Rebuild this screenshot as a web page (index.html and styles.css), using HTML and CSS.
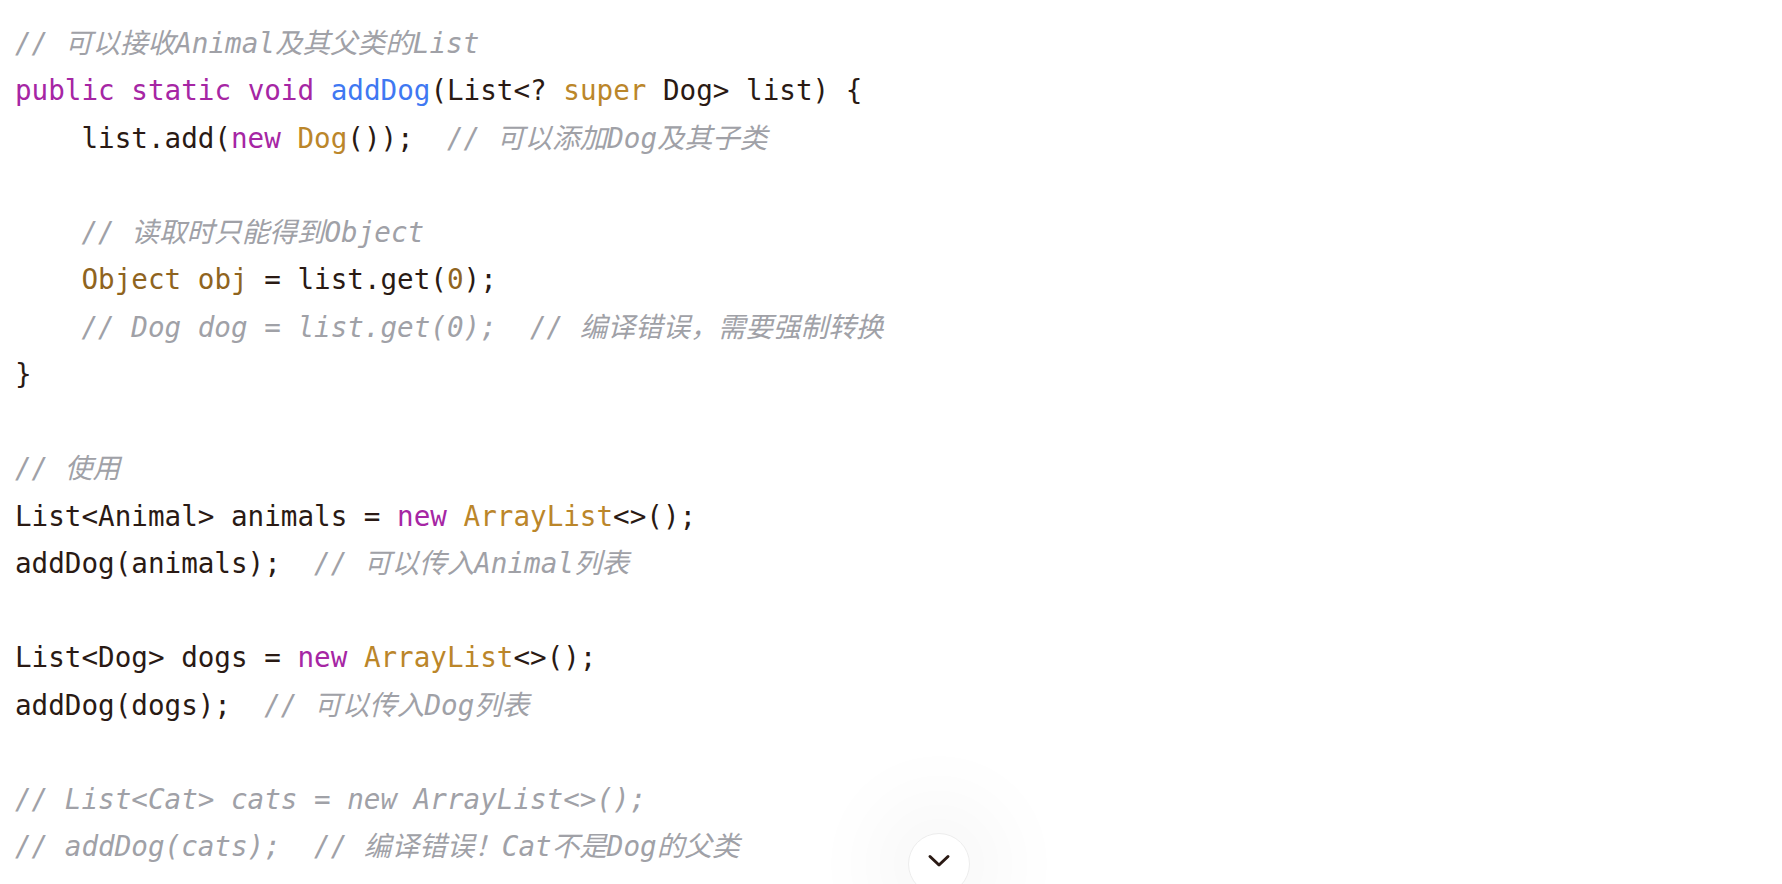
FILE: index.html
```html
<!DOCTYPE html>
<html lang="zh">
<head>
<meta charset="utf-8">
<title>Java 泛型 super 示例</title>
<link rel="stylesheet" href="styles.css">
</head>
<body>
<main class="page">
<pre class="code"><code><span class="c">// 可以接收Animal及其父类的List</span>
<span class="k">public</span> <span class="k">static</span> <span class="k">void</span> <span class="f">addDog</span>(List&lt;? <span class="t">super</span> Dog&gt; list) {
    list.add(<span class="k">new</span> <span class="t">Dog</span>());  <span class="c">// 可以添加Dog及其子类</span>

    <span class="c">// 读取时只能得到Object</span>
    <span class="v">Object</span> <span class="v">obj</span> = list.get(<span class="v">0</span>);
    <span class="c">// Dog dog = list.get(0);  // 编译错误，需要强制转换</span>
}

<span class="c">// 使用</span>
List&lt;Animal&gt; animals = <span class="k">new</span> <span class="t">ArrayList</span>&lt;&gt;();
addDog(animals);  <span class="c">// 可以传入Animal列表</span>

List&lt;Dog&gt; dogs = <span class="k">new</span> <span class="t">ArrayList</span>&lt;&gt;();
addDog(dogs);  <span class="c">// 可以传入Dog列表</span>

<span class="c">// List&lt;Cat&gt; cats = new ArrayList&lt;&gt;();</span>
<span class="c">// addDog(cats);  // 编译错误！Cat不是Dog的父类</span></code></pre>
</main>
<button class="scroll-btn" type="button" aria-label="滚动到底部">
<svg width="24" height="14" viewBox="0 0 24 14" fill="none"><path d="M3 2.5 L12 11 L21 2.5" stroke="#2a1a14" stroke-width="3" stroke-linecap="round" stroke-linejoin="round"/></svg>
</button>
</body>
</html>
```

FILE: styles.css
```css
html, body {
  margin: 0;
  padding: 0;
  background: #ffffff;
  overflow: hidden;
  height: 100%;
}

.page {
  padding: 20px 0 0 15px;
}

.code {
  margin: 0;
  font-family: "DejaVu Sans Mono", "Noto Sans CJK SC", monospace;
  font-size: 27.6px;
  line-height: 47.25px;
  color: #2a1a14;
  white-space: pre;
}

.code code {
  font-family: inherit;
}

.c {
  color: #a0a1a7;
  font-style: italic;
}

.k {
  color: #a626a4;
}

.f {
  color: #4078f2;
}

.t {
  color: #bb862a;
}

.v {
  color: #8f6420;
}

.scroll-btn {
  position: fixed;
  left: 908px;
  top: 833px;
  width: 62px;
  height: 62px;
  border-radius: 50%;
  border: 1px solid #ececec;
  background: #ffffff;
  box-shadow: 0 0 80px 40px rgba(0, 0, 0, 0.03);
  display: flex;
  align-items: center;
  justify-content: center;
  padding: 0 0 6px 0;
  cursor: pointer;
}
```
